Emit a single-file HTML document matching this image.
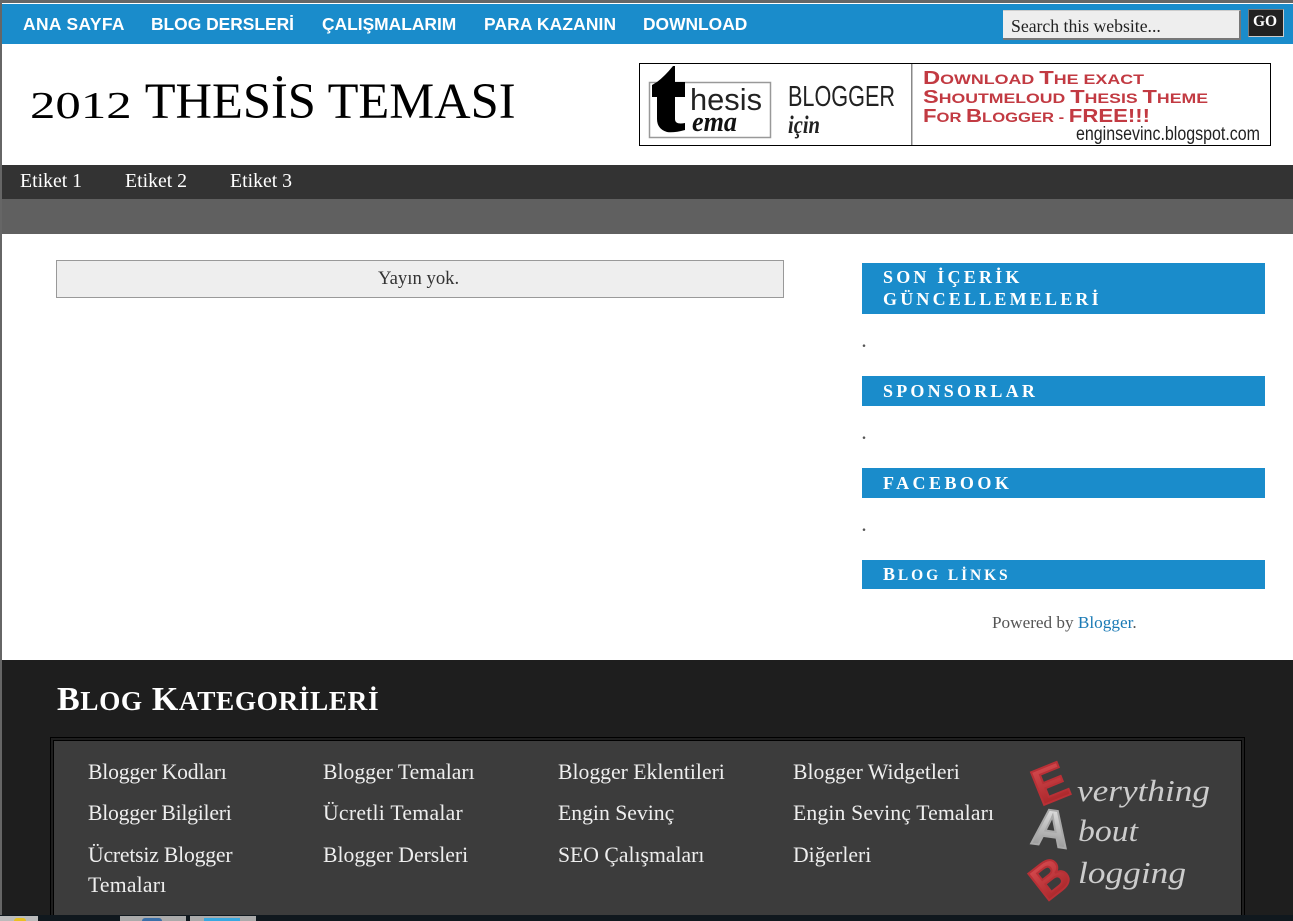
<!DOCTYPE html>
<html><head><meta charset="utf-8"><title>2012 Thesis Teması</title>
<style>
html,body{margin:0;padding:0}
body{width:1293px;height:921px;overflow:hidden;position:relative;background:#fff;font-family:"Liberation Serif",serif}
.a{position:absolute;white-space:nowrap}
.r{position:absolute}
.nav{font:bold 17.4px/20px "Liberation Sans",sans-serif;color:#fff;top:14px}
.tag{font:19.8px/22px "Liberation Serif",serif;color:#fff;top:170px}
.bar{position:absolute;left:862px;width:403px;background:#1a8ccb}
.bt{position:absolute;left:883px;color:#fff;font:bold 18px/22px "Liberation Serif",serif;letter-spacing:3.2px;white-space:nowrap}
.dot{position:absolute;left:862px;color:#555;font:bold 16px/18px "Liberation Serif",serif}
.l{position:absolute;color:#eee;font:21.7px/30px "Liberation Serif",serif;white-space:nowrap}
</style></head><body>
<div class="r" style="left:0;top:0;width:1293px;height:3px;background:#666"></div>
<div class="r" style="left:0;top:0;width:2px;height:921px;background:#666"></div>
<div class="r" style="left:2px;top:4px;width:1291px;height:40px;background:#1a8ccb"></div>
<div class="a nav" style="left:23px;letter-spacing:.4px">ANA SAYFA</div>
<div class="a nav" style="left:151px">BLOG DERSLERİ</div>
<div class="a nav" style="left:322px">ÇALIŞMALARIM</div>
<div class="a nav" style="left:484px;letter-spacing:.15px">PARA KAZANIN</div>
<div class="a nav" style="left:643px">DOWNLOAD</div>
<div class="r" style="left:1003px;top:10px;width:236px;height:27px;background:#eee;border-right:2px solid #777;border-bottom:2px solid #777;border-top:1px solid #ccc"></div>
<div class="a" style="left:1011px;top:15px;font:17.7px/22px 'Liberation Serif',serif;color:#222">Search this website...</div>
<div class="r" style="left:1248px;top:9px;width:34px;height:26px;background:#222;border:1px solid #ddd;border-color:#777 #ccc #ccc #777"></div>
<div class="a" style="left:1253px;top:12px;font:bold 15.5px/20px 'Liberation Serif',serif;color:#fff">GO</div>

<div class="a" style="left:30px;top:71px;font:50.5px/60px 'Liberation Serif',serif;color:#000"><span style="display:inline-block;width:103px;font-size:38.5px;transform:scaleX(1.32);transform-origin:0 100%;letter-spacing:0">2012</span> THESİS TEMASI</div>

<svg class="r" style="left:639px;top:63px" width="632" height="83" viewBox="0 0 632 83">
<rect x=".5" y=".5" width="631" height="82" fill="#fff" stroke="#000"/>
<rect x="272" y="1" width="1.5" height="81" fill="#888"/>
<rect x="10.5" y="19.5" width="121" height="55" fill="#fff" stroke="#999" stroke-width="1.5"/>
<path d="M18 19 Q26 13 34 3 L36 3 L36 19 L46 19 L46 34 L36 34 L36 56 Q36 62 46 60 L46 67 Q35 70 28 69 Q18 66 18 56 L18 34 L13 34 L13 22 Z" fill="#000"/>
<text x="51" y="47" font-family="Liberation Sans" font-size="31" textLength="72" lengthAdjust="spacingAndGlyphs" fill="#222">hesis</text>
<text x="53" y="68" font-family="Liberation Serif" font-weight="bold" font-style="italic" font-size="29" textLength="45" lengthAdjust="spacingAndGlyphs" fill="#111">ema</text>
<text x="149" y="43" font-family="Liberation Sans" font-size="29" textLength="107" lengthAdjust="spacingAndGlyphs" fill="#222">BLOGGER</text>
<text x="149" y="70" font-family="Liberation Serif" font-weight="bold" font-style="italic" font-size="25" textLength="32" lengthAdjust="spacingAndGlyphs" fill="#222">için</text>
<g font-family="Liberation Sans" font-weight="bold" fill="#c23a42" font-size="13.5">
<text x="284" y="21" textLength="221" lengthAdjust="spacingAndGlyphs"><tspan font-size="18">D</tspan>OWNLOAD <tspan font-size="18">T</tspan>HE EXACT</text>
<text x="284" y="40" textLength="285" lengthAdjust="spacingAndGlyphs"><tspan font-size="18">S</tspan>HOUTMELOUD <tspan font-size="18">T</tspan>HESIS <tspan font-size="18">T</tspan>HEME</text>
<text x="284" y="59" textLength="227" lengthAdjust="spacingAndGlyphs"><tspan font-size="18">F</tspan>OR <tspan font-size="18">B</tspan>LOGGER - <tspan font-size="18">FREE!!!</tspan></text>
</g>
<text x="437" y="77" font-family="Liberation Sans" font-size="19" textLength="184" lengthAdjust="spacingAndGlyphs" fill="#222">enginsevinc.blogspot.com</text>
</svg>

<div class="r" style="left:2px;top:165px;width:1291px;height:34px;background:#333"></div>
<div class="a tag" style="left:20px">Etiket 1</div>
<div class="a tag" style="left:125px">Etiket 2</div>
<div class="a tag" style="left:230px">Etiket 3</div>
<div class="r" style="left:2px;top:199px;width:1291px;height:35px;background:#606060"></div>

<div class="r" style="left:56px;top:260px;width:726px;height:36px;background:#eee;border:1px solid #999"></div>
<div class="a" style="left:378px;top:268px;font:18.7px/22px 'Liberation Serif',serif;color:#333">Yayın yok.</div>

<div class="bar" style="top:263px;height:51px"></div>
<div class="bt" style="top:266px">SON İÇERİK</div>
<div class="bt" style="top:288px">GÜNCELLEMELERİ</div>
<div class="dot" style="top:334px">.</div>
<div class="bar" style="top:376px;height:30px"></div>
<div class="bt" style="top:380px">SPONSORLAR</div>
<div class="dot" style="top:426px">.</div>
<div class="bar" style="top:468px;height:30px"></div>
<div class="bt" style="top:472px;letter-spacing:3.45px">FACEBOOK</div>
<div class="dot" style="top:518px">.</div>
<div class="bar" style="top:560px;height:29px"></div>
<div class="bt" style="top:563px;letter-spacing:2.9px"><span style="font-size:18px">B</span><span style="font-size:15.5px">LOG LİNKS</span></div>
<div class="a" style="left:992px;top:613px;font:17.2px/20px 'Liberation Serif',serif;color:#555">Powered by <span style="color:#1a7ab5">Blogger</span>.</div>

<div class="r" style="left:2px;top:660px;width:1291px;height:255px;background:#1e1e1e"></div>
<div class="a" style="left:57px;top:680px;font:bold 34px/40px 'Liberation Serif',serif;color:#fff;letter-spacing:.6px">B<span style="font-size:27.3px">LOG</span> K<span style="font-size:27.3px">ATEGORİLERİ</span></div>
<div class="r" style="left:50px;top:737px;width:1195px;height:178px;box-sizing:border-box;border:1px solid #000;border-bottom:0"></div>
<div class="r" style="left:53px;top:740px;width:1189px;height:175px;box-sizing:border-box;border:1px solid #000;border-bottom:0;background:#3c3c3c"></div>

<div class="l" style="left:88px;top:757px;letter-spacing:-.2px">Blogger Kodları</div>
<div class="l" style="left:323px;top:757px">Blogger Temaları</div>
<div class="l" style="left:558px;top:757px">Blogger Eklentileri</div>
<div class="l" style="left:793px;top:757px">Blogger Widgetleri</div>
<div class="l" style="left:88px;top:798px;letter-spacing:-.24px">Blogger Bilgileri</div>
<div class="l" style="left:323px;top:798px;letter-spacing:.27px">Ücretli Temalar</div>
<div class="l" style="left:558px;top:798px">Engin Sevinç</div>
<div class="l" style="left:793px;top:798px;letter-spacing:.15px">Engin Sevinç Temaları</div>
<div class="l" style="left:88px;top:840px;letter-spacing:-.2px">Ücretsiz Blogger</div>
<div class="l" style="left:88px;top:870px;letter-spacing:.2px">Temaları</div>
<div class="l" style="left:323px;top:840px">Blogger Dersleri</div>
<div class="l" style="left:558px;top:840px">SEO Çalışmaları</div>
<div class="l" style="left:793px;top:840px">Diğerleri</div>

<svg class="r" style="left:1020px;top:755px" width="200" height="150" viewBox="0 0 200 150">
<defs>
<linearGradient id="rg" x1="0" y1="0" x2="0" y2="1"><stop offset="0" stop-color="#dc5055"/><stop offset="1" stop-color="#a01f22"/></linearGradient>
<linearGradient id="gg" x1="0" y1="0" x2="0" y2="1"><stop offset="0" stop-color="#eee"/><stop offset="1" stop-color="#888"/></linearGradient>
</defs>
<g font-family="Liberation Sans" font-weight="bold" text-anchor="middle" stroke-width="2" stroke-linejoin="miter">
<text transform="translate(30,28) rotate(-22)" y="18" font-size="51" fill="url(#rg)" stroke="#b83036">E</text>
<text transform="translate(31,73) rotate(8)" y="18" font-size="52" fill="url(#gg)" stroke="#aaa">A</text>
<text transform="translate(30,123) rotate(-38)" y="17" font-size="49" fill="url(#rg)" stroke="#b83036">B</text>
</g>
<g font-family="Liberation Serif" font-style="italic" font-size="31" fill="#ccc">
<text x="57" y="46" textLength="133" lengthAdjust="spacingAndGlyphs">verything</text>
<text x="58" y="86" textLength="60" lengthAdjust="spacingAndGlyphs">bout</text>
<text x="58" y="128" textLength="108" lengthAdjust="spacingAndGlyphs">logging</text>
</g>
</svg>

<div class="r" style="left:0;top:915px;width:1293px;height:6px;background:#10181e"></div>
<div class="r" style="left:0;top:916px;width:38px;height:5px;background:#bbb"></div>
<div class="r" style="left:14px;top:918px;width:12px;height:3px;background:#e8c020;border-radius:6px 6px 0 0"></div>
<div class="r" style="left:120px;top:916px;width:66px;height:5px;background:#aaa"></div>
<div class="r" style="left:142px;top:918px;width:20px;height:3px;background:#3a6fa8;border-radius:6px 6px 0 0"></div>
<div class="r" style="left:190px;top:916px;width:66px;height:5px;background:#aaa"></div>
<div class="r" style="left:204px;top:918px;width:36px;height:3px;background:#38a8e0"></div>
</body></html>
